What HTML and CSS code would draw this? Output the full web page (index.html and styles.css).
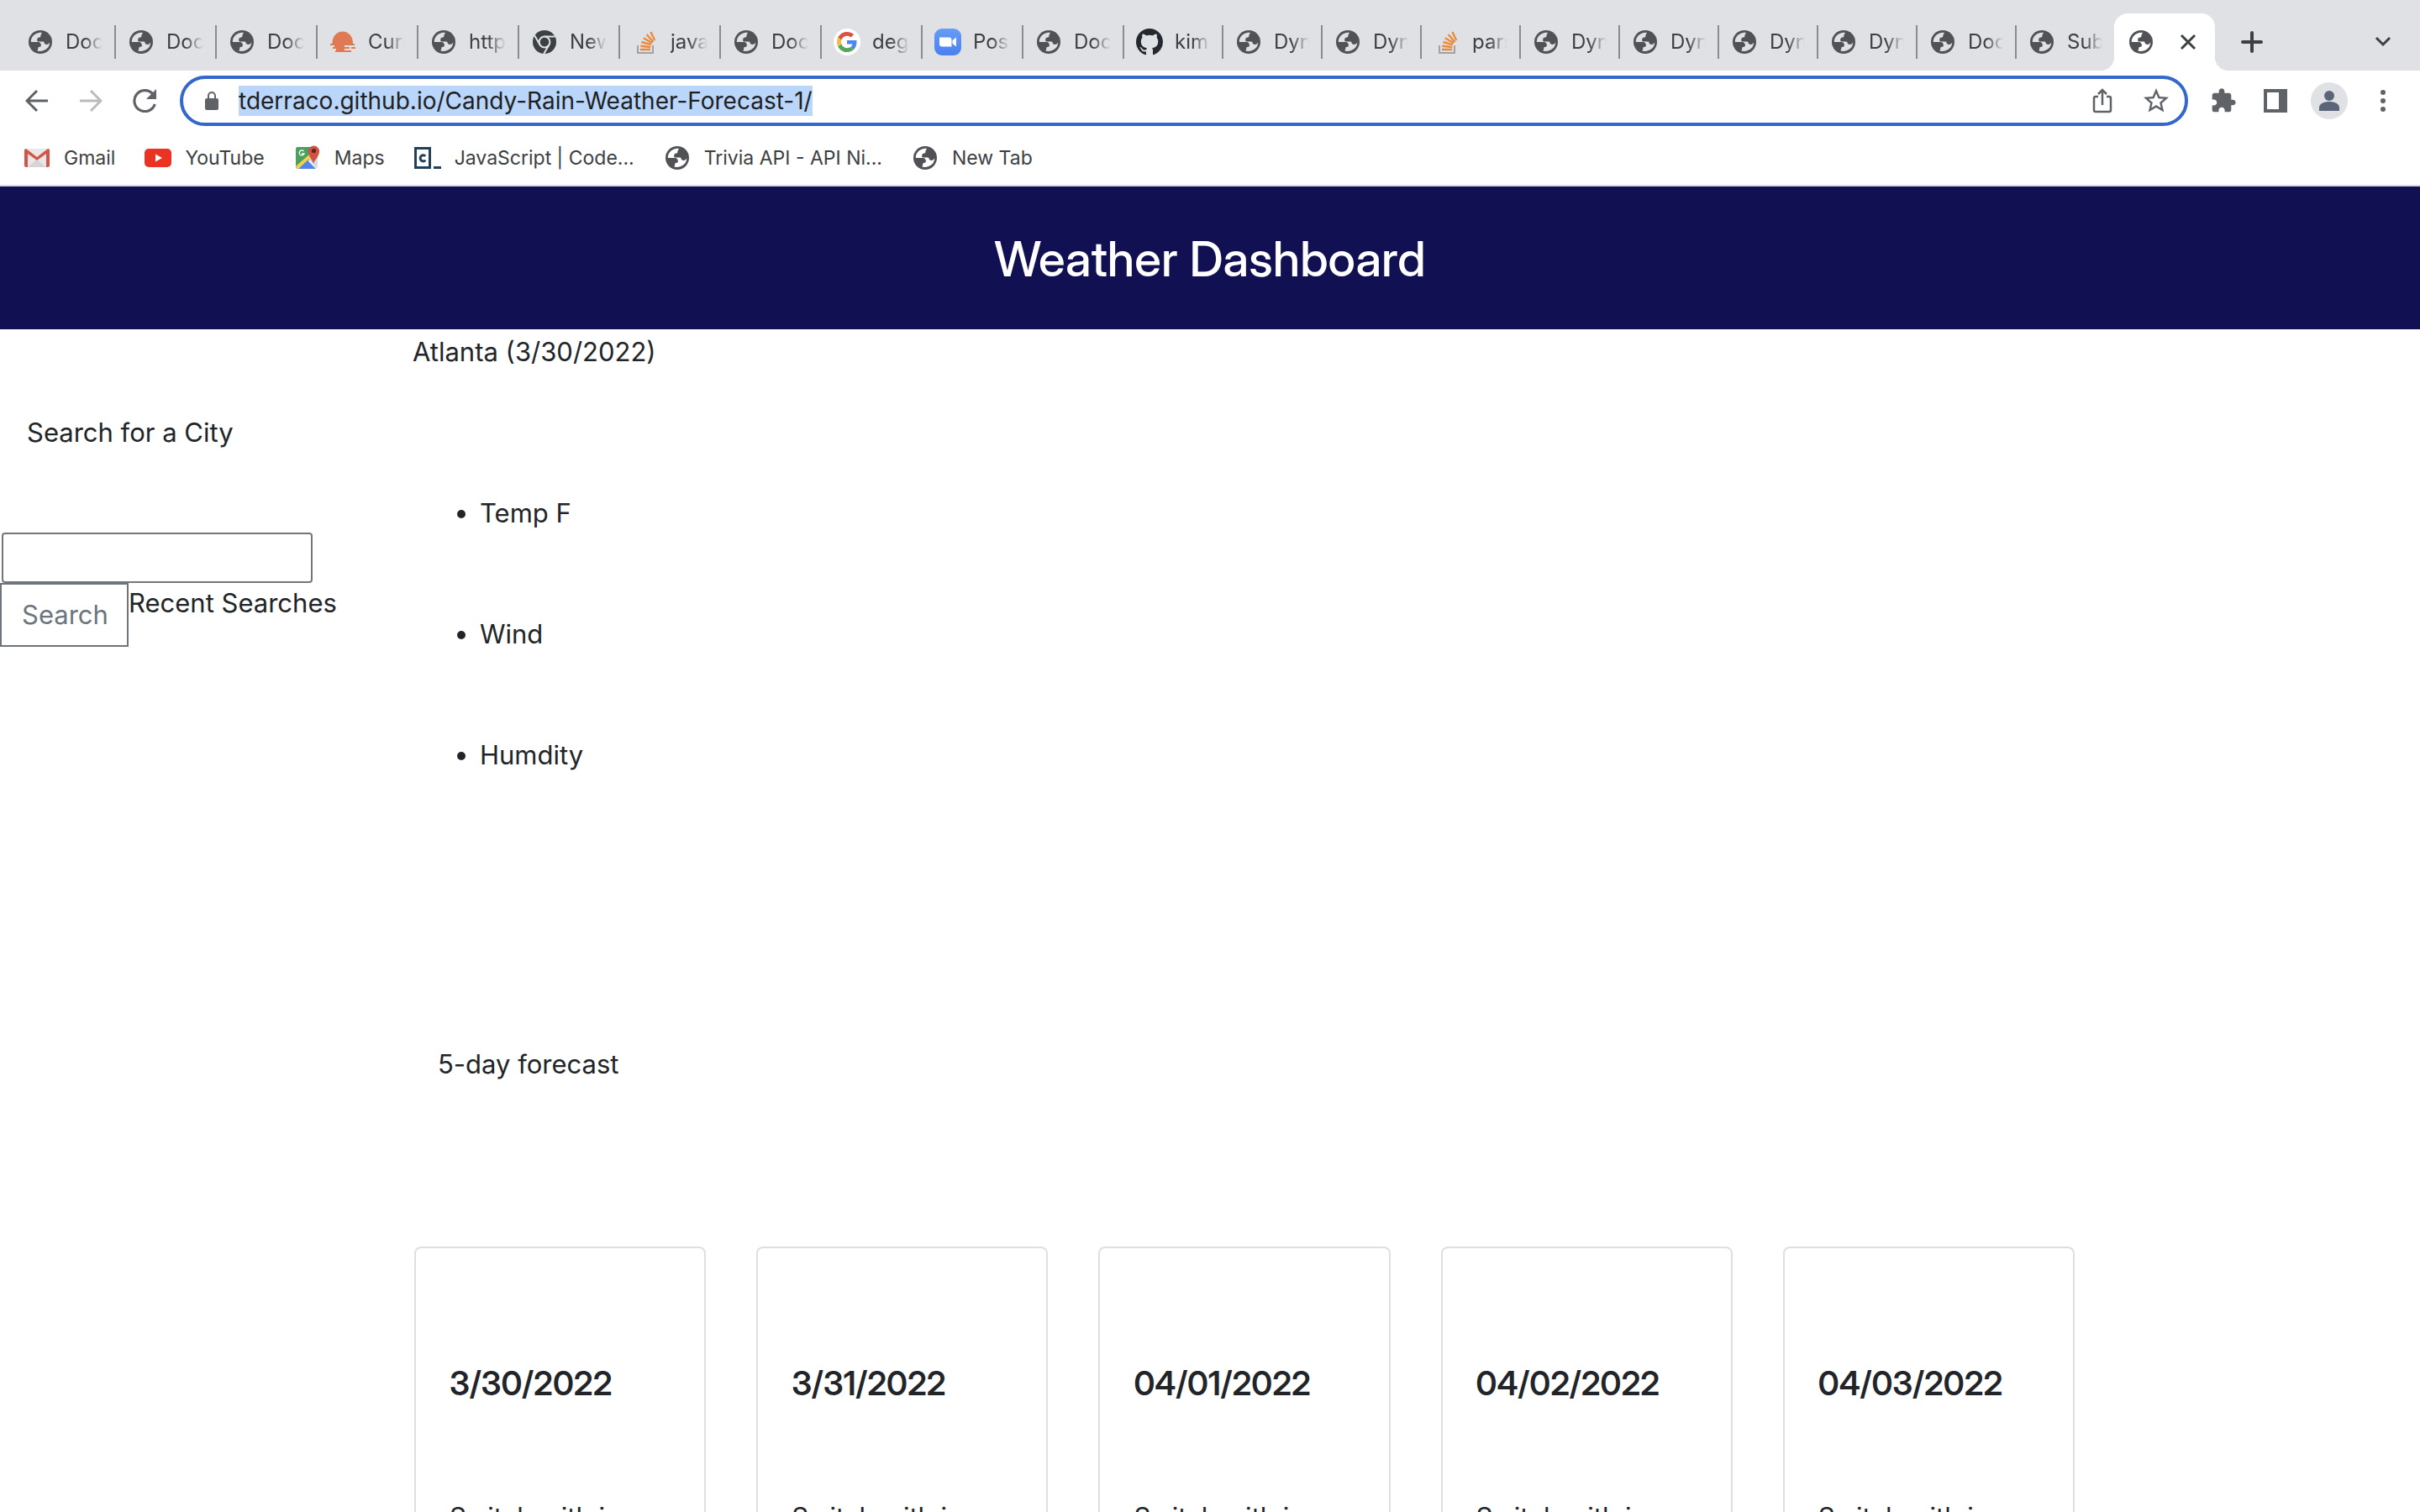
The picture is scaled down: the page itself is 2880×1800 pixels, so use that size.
FILE: index.html
```html
<!DOCTYPE html>
<html lang="en">
<head>
<meta charset="utf-8">
<meta name="viewport" content="width=device-width, initial-scale=1">
<title>Weather Dashboard</title>
<link rel="stylesheet" href="styles.css">
</head>
<body>

<svg class="sprite" aria-hidden="true">
  <symbol id="globe" viewBox="0 0 28 28">
    <circle cx="14" cy="14" r="14" fill="#505256"/>
    <path class="globe-sea" d="M15.8 2.8C8.6 2 2.6 7.4 2.8 13.9H11.6C13.4 14 14.6 15.4 14.8 17C15 18.6 14.8 19.6 13.4 19.8C11.6 20 11.2 20.4 11.2 22C11.2 23.2 10.6 23.8 10.2 24.6C18.4 26.4 25.6 20.8 25.2 14.2C24.6 15.8 23.4 16.9 21.6 16.9C19.6 16.9 18.6 16 18.5 14.8C18.4 13.8 17.8 13.6 16.4 13.6H11.4C10.4 13.6 10.2 12.8 10.2 11.6C10.2 9.4 11 8.6 13 8.4C14.2 8.2 14.4 7.6 14.4 6.4C14.4 5 15.6 4.6 15.8 2.8Z"/>
  </symbol>
  <symbol id="stack" viewBox="0 0 32 32">
    <path d="M7 19v9h18v-9" transform="translate(0 1)" fill="none" stroke="#9fa2a7" stroke-width="2"/>
    <g stroke="#e98a3c" stroke-width="2.4" fill="none">
      <path d="M10 25h12M10.300 20.800l12 1.200M11.400 16l11.400 3.200M13.800 11.200l10.200 6M17.600 7l7.800 9M22.400 4l4.800 10"/>
    </g>
  </symbol>
</svg>

<div class="browser">
  <div class="tab-strip" role="tablist">
    <button class="tab" role="tab"><svg class="icon28"><use href="#globe"/></svg><span class="tab-title">Document</span></button>
    <button class="tab" role="tab"><svg class="icon28"><use href="#globe"/></svg><span class="tab-title">Document</span></button>
    <button class="tab" role="tab"><svg class="icon28"><use href="#globe"/></svg><span class="tab-title">Document</span></button>
    <button class="tab" role="tab"><svg class="icon32" viewBox="0 0 32 32" fill="#e07a55"><path d="M3.500 17C3.500 9 9 3.500 15.700 3.500S28 9 28 17v1h2v2H1v-2h2.500zM6 20h12v2H6zM4 22h16v2H4zM8 24h10v3H8zM20 22h4v2h-4zM26 22h5v2h-5zM7 26h19v2H7zM20 18h8v1h-8z"/></svg><span class="tab-title">Current</span></button>
    <button class="tab" role="tab"><svg class="icon28"><use href="#globe"/></svg><span class="tab-title">https</span></button>
    <button class="tab" role="tab"><svg class="icon28" viewBox="0 0 28 28"><circle cx="14" cy="14" r="14" fill="#3c4043"/><g fill="none" stroke="#dfe1e5" stroke-width="2"><circle cx="14" cy="14" r="6.400"/><path d="M14 7.600h12.600M8.500 17.200L2.200 6.300M19.500 17.200L13.200 28"/></g></svg><span class="tab-title">New Tab</span></button>
    <button class="tab" role="tab"><svg class="icon32"><use href="#stack"/></svg><span class="tab-title">javascript</span></button>
    <button class="tab" role="tab"><svg class="icon28"><use href="#globe"/></svg><span class="tab-title">Document</span></button>
    <button class="tab" role="tab"><svg class="icon32" viewBox="0 0 64 64"><circle cx="32" cy="32" r="32" fill="#fff"/><g transform="translate(8 8)"><path fill="#dd5144" d="M24 9.500c3.540 0 6.710 1.220 9.210 3.600l6.850-6.850C35.900 2.380 30.470 0 24 0 14.620 0 6.510 5.380 2.560 13.220l7.980 6.190C12.430 13.720 17.740 9.500 24 9.500z"/><path fill="#4e85ee" d="M46.980 24.550c0-1.570-.15-3.090-.38-4.550H24v9.020h12.940c-.58 2.960-2.260 5.480-4.780 7.180l7.730 6c4.510-4.180 7.090-10.360 7.090-17.650z"/><path fill="#f2bd42" d="M10.530 28.590c-.48-1.450-.76-2.990-.76-4.590s.27-3.140.76-4.590l-7.980-6.190C.92 16.460 0 20.120 0 24s.92 7.540 2.560 10.780z"/><path fill="#58a55c" d="M24 48c6.480 0 11.930-2.130 15.890-5.810l-7.730-6c-2.150 1.450-4.920 2.300-8.160 2.300-6.260 0-11.570-4.220-13.470-9.910l-7.980 6.190C6.510 42.620 14.620 48 24 48z"/></g></svg><span class="tab-title">degree</span></button>
    <button class="tab" role="tab"><svg class="icon32" viewBox="0 0 32 32"><defs><linearGradient id="zoom" x2="0" y2="1"><stop stop-color="#669df6"/><stop offset="1" stop-color="#4a80f0"/></linearGradient></defs><rect width="32" height="32" rx="9" fill="url(#zoom)"/><path fill="#fff" d="M6 10.500h11.500a3 3 0 013 3v8H9a3 3 0 01-3-3zM21.500 14l4.500-3.500v11L21.500 18z"/></svg><span class="tab-title">Post</span></button>
    <button class="tab" role="tab"><svg class="icon28"><use href="#globe"/></svg><span class="tab-title">Document</span></button>
    <button class="tab tab-narrow" role="tab"><svg class="icon32" viewBox="0 0 16 16"><path fill="#24292f" d="M8 0C3.580 0 0 3.580 0 8c0 3.540 2.290 6.530 5.470 7.590.4.070.55-.17.55-.38 0-.19-.01-.82-.01-1.490-2.010.37-2.530-.49-2.690-.94-.09-.23-.48-.94-.82-1.130-.28-.15-.68-.52-.01-.53.63-.01 1.080.58 1.230.82.72 1.210 1.870.87 2.330.66.07-.52.28-.87.51-1.070-1.780-.2-3.640-.89-3.640-3.950 0-.87.31-1.590.82-2.150-.08-.2-.36-1.020.08-2.120 0 0 .67-.21 2.200.82.64-.18 1.320-.27 2-.27s1.360.09 2 .27c1.530-1.040 2.200-.82 2.200-.82.44 1.100.16 1.920.08 2.120.51.56.82 1.270.82 2.150 0 3.070-1.870 3.750-3.650 3.950.29.25.54.73.54 1.480 0 1.070-.01 1.930-.01 2.200 0 .21.15.46.55.38A8.010 8.010 0 0016 8c0-4.420-3.580-8-8-8z"/></svg><span class="tab-title">kimberly</span></button>
    <button class="tab tab-narrow" role="tab"><svg class="icon28"><use href="#globe"/></svg><span class="tab-title">Dynamic</span></button>
    <button class="tab tab-narrow" role="tab"><svg class="icon28"><use href="#globe"/></svg><span class="tab-title">Dynamic</span></button>
    <button class="tab tab-narrow" role="tab"><svg class="icon32"><use href="#stack"/></svg><span class="tab-title">parse</span></button>
    <button class="tab tab-narrow" role="tab"><svg class="icon28"><use href="#globe"/></svg><span class="tab-title">Dynamic</span></button>
    <button class="tab tab-narrow" role="tab"><svg class="icon28"><use href="#globe"/></svg><span class="tab-title">Dynamic</span></button>
    <button class="tab tab-narrow" role="tab"><svg class="icon28"><use href="#globe"/></svg><span class="tab-title">Dynamic</span></button>
    <button class="tab tab-narrow" role="tab"><svg class="icon28"><use href="#globe"/></svg><span class="tab-title">Dynamic</span></button>
    <button class="tab tab-narrow" role="tab"><svg class="icon28"><use href="#globe"/></svg><span class="tab-title">Document</span></button>
    <button class="tab tab-narrow tab-last" role="tab"><svg class="icon28"><use href="#globe"/></svg><span class="tab-title">Submit</span></button>
    <div class="tab-active" role="tab" aria-selected="true" aria-label="Weather Dashboard">
      <svg class="icon28"><use href="#globe"/></svg>
      <button class="plain" aria-label="Close tab"><svg class="icon20" viewBox="0 0 20 20"><path d="M2 2l16 16M18 2L2 18" stroke="#3c4043" stroke-width="3" fill="none"/></svg></button>
    </div>
    <button class="plain new-tab" aria-label="New tab"><svg class="icon28" viewBox="0 0 28 28"><path d="M14 3v22M3 14h22" stroke="#3c4043" stroke-width="4" stroke-linecap="round"/></svg></button>
    <button class="plain tab-list" aria-label="Search tabs"><svg class="icon20" viewBox="0 0 20 20"><path d="M2 5l8 8 8-8" stroke="#3c4043" stroke-width="3" fill="none"/></svg></button>
  </div>

  <div class="toolbar">
    <button class="plain nav-button" aria-label="Back"><svg class="icon28" viewBox="0 0 28 28"><path d="M27 14H2M14 2L2 14l12 12" fill="none" stroke="#5f6368" stroke-width="3"/></svg></button>
    <button class="plain nav-button" aria-label="Forward"><svg class="icon28" viewBox="0 0 28 28"><path d="M1 14h25M14 2l12 12-12 12" fill="none" stroke="#babcbe" stroke-width="3"/></svg></button>
    <button class="plain nav-button" aria-label="Reload"><svg class="icon28" viewBox="0 0 28 28"><path d="M26.300 18A12.500 12.500 0 1123.500 5.500" fill="none" stroke="#5f6368" stroke-width="3.200"/><path d="M28 0v12H16z" fill="#5f6368"/></svg></button>
    <div class="address">
      <svg class="lock" viewBox="0 0 16 22"><path fill="#5f6368" fill-rule="evenodd" d="M2 8H3V5a5 5 0 0110 0v3h1a2 2 0 012 2v10a2 2 0 01-2 2H2a2 2 0 01-2-2V10a2 2 0 012-2zM5 8h6V5a3 3 0 00-6 0z"/></svg>
      <input class="url" type="text" aria-label="Address" size="40" value="tderraco.github.io/Candy-Rain-Weather-Forecast-1/">
      <button class="plain share" aria-label="Share"><svg class="icon32" viewBox="0 0 32 32" fill="none" stroke="#5f6368" stroke-width="2.500"><path d="M11 11H8a2 2 0 00-2 2v14a2 2 0 002 2h16a2 2 0 002-2V13a2 2 0 00-2-2h-3M16 21V3M11 8l5-5 5 5"/></svg></button>
      <button class="plain" aria-label="Bookmark"><svg class="icon36" viewBox="0 0 24 24"><path fill="#5f6368" d="M22 9.240l-7.190-.62L12 2 9.190 8.630 2 9.240l5.460 4.730L5.820 21 12 17.270 18.180 21l-1.630-7.030L22 9.240zM12 15.400l-3.760 2.270 1-4.280-3.320-2.880 4.380-.38L12 6.100l1.710 4.040 4.380.38-3.320 2.880 1 4.280L12 15.400z"/></svg></button>
    </div>
    <div class="actions">
      <button class="plain extensions" aria-label="Extensions"><svg class="icon32" viewBox="0 0 24 24"><path fill="#5f6368" d="M20.500 11H19V7c0-1.100-.9-2-2-2h-4V3.500C13 2.120 11.880 1 10.500 1S8 2.120 8 3.500V5H4c-1.100 0-1.990.9-1.990 2v3.800H3.500c1.490 0 2.700 1.210 2.700 2.700s-1.210 2.700-2.700 2.700H2V20c0 1.100.9 2 2 2h3.800v-1.500c0-1.490 1.210-2.700 2.700-2.700 1.490 0 2.700 1.210 2.700 2.700V22H17c1.100 0 2-.9 2-2v-4h1.500c1.380 0 2.500-1.120 2.500-2.500S21.880 11 20.500 11z"/></svg></button>
      <button class="plain" aria-label="Side panel"><svg class="icon28" viewBox="0 0 28 28"><path fill="#5f6368" fill-rule="evenodd" d="M0 0h28v28H0zM4 4v20h14V4z"/></svg></button>
      <button class="plain avatar" aria-label="Profile"><svg class="icon28" viewBox="0 0 28 28" fill="#5a6577"><circle cx="14" cy="8" r="6"/><path d="M2 26v-4c0-4.500 6-7 12-7s12 2.500 12 7v4z"/></svg></button>
      <button class="plain" aria-label="Menu"><svg class="icon28" viewBox="0 0 28 28" fill="#5f6368"><circle cx="14" cy="4" r="3"/><circle cx="14" cy="14" r="3"/><circle cx="14" cy="24" r="3"/></svg></button>
    </div>
  </div>

  <nav class="bookmarks" aria-label="Bookmarks">
    <a class="bookmark" href="#"><svg class="icon32" viewBox="0 0 32 32"><path fill="#e8e8e8" d="M2 5h28v22H2z"/><path fill="#d5d5d5" d="M5 27l11-9 11 9z"/><path fill="#d45448" d="M1 7a2 2 0 012-2l13 10L29 5a2 2 0 012 2v18a2 2 0 01-2 2h-2V11L16 19 5 11v16H3a2 2 0 01-2-2z"/></svg>Gmail</a>
    <a class="bookmark" href="#"><svg class="icon32" viewBox="0 0 32 32"><rect y="5" width="32" height="22" rx="5" fill="#ea3323"/><path fill="#fff" d="M13 11.500l8 4.500-8 4.500z"/></svg>YouTube</a>
    <a class="bookmark" href="#"><svg class="icon32" viewBox="0 0 32 32"><path fill="#4d9f60" d="M4 3h18l4 10L4 29a2 2 0 01-2-2V5a2 2 0 012-2z"/><path fill="#d8dadd" d="M28 10v17l-2 1-9-11z"/><path fill="#f5d04c" d="M2 26L19 11l3 3L5 29H3z"/><path fill="#5383ec" d="M5 29l11-10 10 10z"/><path fill="#cf5244" d="M23 23c-1-5-6-8-6-15a6.500 6.500 0 0113 0c0 7-6 10-7 15z"/><circle cx="23.500" cy="7.500" r="2.600" fill="#6a211c"/><path d="M11.500 8a3 3 0 10.500 3H9" fill="none" stroke="#fff" stroke-width="1.300"/></svg>Maps</a>
    <a class="bookmark" href="#"><svg class="icon32" viewBox="0 0 32 32" fill="none" stroke="#23405a"><path d="M1.500 4.500h17v23h-17z" stroke-width="3"/><path d="M13.300 13.800a3.600 3.600 0 100 5" stroke-width="3"/><path d="M23 27.500h9" stroke-width="3"/></svg>JavaScript | Code...</a>
    <a class="bookmark" href="#"><svg class="icon28"><use href="#globe"/></svg>Trivia API - API Ni...</a>
    <a class="bookmark" href="#"><svg class="icon28"><use href="#globe"/></svg>New Tab</a>
  </nav>
</div>

<header class="page-header"><h1>Weather Dashboard</h1></header>

<div class="layout">
  <aside class="sidebar">
    <label class="search-label" for="city">Search for a City</label>
    <input class="city-input" id="city" type="text">
    <div class="search-row">
      <button class="search-button" type="button">Search</button>
      <p>Recent Searches</p>
    </div>
  </aside>
  <main class="content">
    <p>Atlanta (3/30/2022)</p>
    <ul class="readings">
      <li>Temp F</li>
      <li>Wind</li>
      <li>Humdity</li>
    </ul>
    <p class="forecast-title">5-day forecast</p>
    <div class="cards">
      <article class="card"><h2>3/30/2022</h2><p>Switch with icon</p></article>
      <article class="card"><h2>3/31/2022</h2><p>Switch with icon</p></article>
      <article class="card"><h2>04/01/2022</h2><p>Switch with icon</p></article>
      <article class="card"><h2>04/02/2022</h2><p>Switch with icon</p></article>
      <article class="card"><h2>04/03/2022</h2><p>Switch with icon</p></article>
    </div>
  </main>
</div>

</body>
</html>
```
FILE: styles.css
```css
* { box-sizing: border-box; }

body {
  margin: 0;
  height: 100vh;
  overflow: hidden;
  background: #fff;
  color: #212529;
  font-family: Inter, "Liberation Sans", sans-serif;
  font-size: 31px;
  line-height: 48px;
}

h1, h2, p, ul { margin: 0; font-weight: inherit; }

.sprite { position: absolute; width: 0; height: 0; }
svg { display: block; flex: none; }
.icon20 { width: 20px; height: 20px; }
.icon28 { width: 28px; height: 28px; }
.icon32 { width: 32px; height: 32px; }
.icon36 { width: 36px; height: 36px; }

button { font: inherit; color: inherit; }
.plain { display: block; padding: 0; border: 0; background: none; }

/* Browser frame */
.browser { border-bottom: 2px solid #dadce0; font-size: 23px; line-height: 28px; color: #3c4043; }

.tab-strip {
  display: flex;
  align-items: flex-end;
  height: 84px;
  padding: 0 34px 0 18px;
  background: #dfe1e5;
}
.globe-sea { fill: var(--sea, #dfe1e5); }
.tab-active, .bookmarks { --sea: #fff; }

.tab {
  display: flex;
  align-items: center;
  gap: 14px;
  flex: 0 1 120px;
  height: 40px;
  margin-bottom: 14px;
  padding: 0 14px;
  border: 0;
  border-right: 2px solid #8a8c91;
  background: none;
  font-size: 24px;
  overflow: hidden;
}
.tab .icon28, .bookmark .icon28 { margin: 0 2px; }
.tab-narrow { flex-basis: 118px; }
.tab-last { flex-basis: 116px; border-right: 0; }
.tab-title {
  flex: 1;
  min-width: 0;
  overflow: hidden;
  white-space: nowrap;
  text-align: left;
  mask-image: linear-gradient(to right, #000 50%, transparent);
}
.tab-active {
  display: flex;
  align-items: center;
  justify-content: space-between;
  flex: 0 0 120px;
  height: 68px;
  padding: 0 22px 0 18px;
  border-radius: 16px 16px 0 0;
  background: #fff;
  position: relative;
}
.tab-active::before, .tab-active::after {
  content: "";
  position: absolute;
  bottom: 0;
  width: 16px;
  height: 16px;
}
.tab-active::before { right: 100%; background: radial-gradient(circle at 0 0, transparent 16px, #fff 16px); }
.tab-active::after { left: 100%; background: radial-gradient(circle at 100% 0, transparent 16px, #fff 16px); }
.new-tab { margin: 0 0 20px 30px; }
.tab-list { margin: 0 0 24px auto; }

.toolbar {
  display: flex;
  align-items: center;
  padding: 6px 30px;
}
.nav-button { margin-right: 36px; }
.nav-button:nth-child(3) { margin-right: 28px; }
.address {
  display: flex;
  align-items: center;
  flex: 1;
  height: 60px;
  padding: 0 16px 0 26px;
  border: 4px solid #3367cb;
  border-radius: 30px;
}
.lock { width: 16px; height: 22px; }
.url {
  field-sizing: content;
  margin-left: 24px;
  padding: 0;
  border: 0;
  background: #bad6fb;
  color: #202124;
  font: 28px/36px Inter, "Liberation Sans", sans-serif;
  height: 36px;
}
.share { margin: 0 30px 0 auto; }
.actions { display: flex; align-items: center; gap: 28px; margin-left: 26px; }
.extensions { margin-right: 4px; }
.avatar {
  display: grid;
  place-items: center;
  width: 44px;
  height: 44px;
  border-radius: 50%;
  background: #dfe1e5;
}

.bookmarks {
  display: flex;
  align-items: center;
  gap: 35px;
  height: 64px;
  padding: 0 28px;
}
.bookmark {
  display: flex;
  align-items: center;
  gap: 16px;
  color: inherit;
  text-decoration: none;
  white-space: nowrap;
}

/* Dashboard page */
.page-header {
  padding: 50px 32px 48px;
  background: #101052;
  color: #fff;
  text-align: center;
}
.page-header h1 {
  font: 500 58px/72px "Inter Display", Inter, sans-serif;
}

.layout { display: flex; padding-top: 3px; }
.sidebar { flex: 0 0 491px; padding-top: 96px; }
.search-label { display: block; padding-left: 32px; margin-bottom: 95px; }
.city-input {
  display: block;
  width: 370px;
  height: 60px;
  margin-left: 2px;
  padding: 2px 4px;
  border: 2px solid #767676;
  border-radius: 4px;
  background: #fff;
  font: inherit;
}
.search-row { display: flex; }
.search-button {
  width: 153px;
  height: 76px;
  padding: 0 24px;
  border: 2px solid #6c757d;
  background: none;
  color: #6c757d;
}

.content { flex: 1; padding-right: 411px; }
.readings {
  display: grid;
  gap: 96px;
  margin: 144px 0 320px;
  padding-left: 80px;
}
.forecast-title { padding-left: 30px; margin-bottom: 193px; }
.cards {
  display: grid;
  grid-template-columns: repeat(5, 1fr);
  gap: 60px;
  padding-left: 2px;
}
.card {
  padding: 137px 40px 80px;
  border: 2px solid #dfdfdf;
  border-radius: 8px;
}
.card h2 {
  margin-bottom: 111px;
  font: 600 39px/48px "Inter Display", Inter, sans-serif;
}
```
